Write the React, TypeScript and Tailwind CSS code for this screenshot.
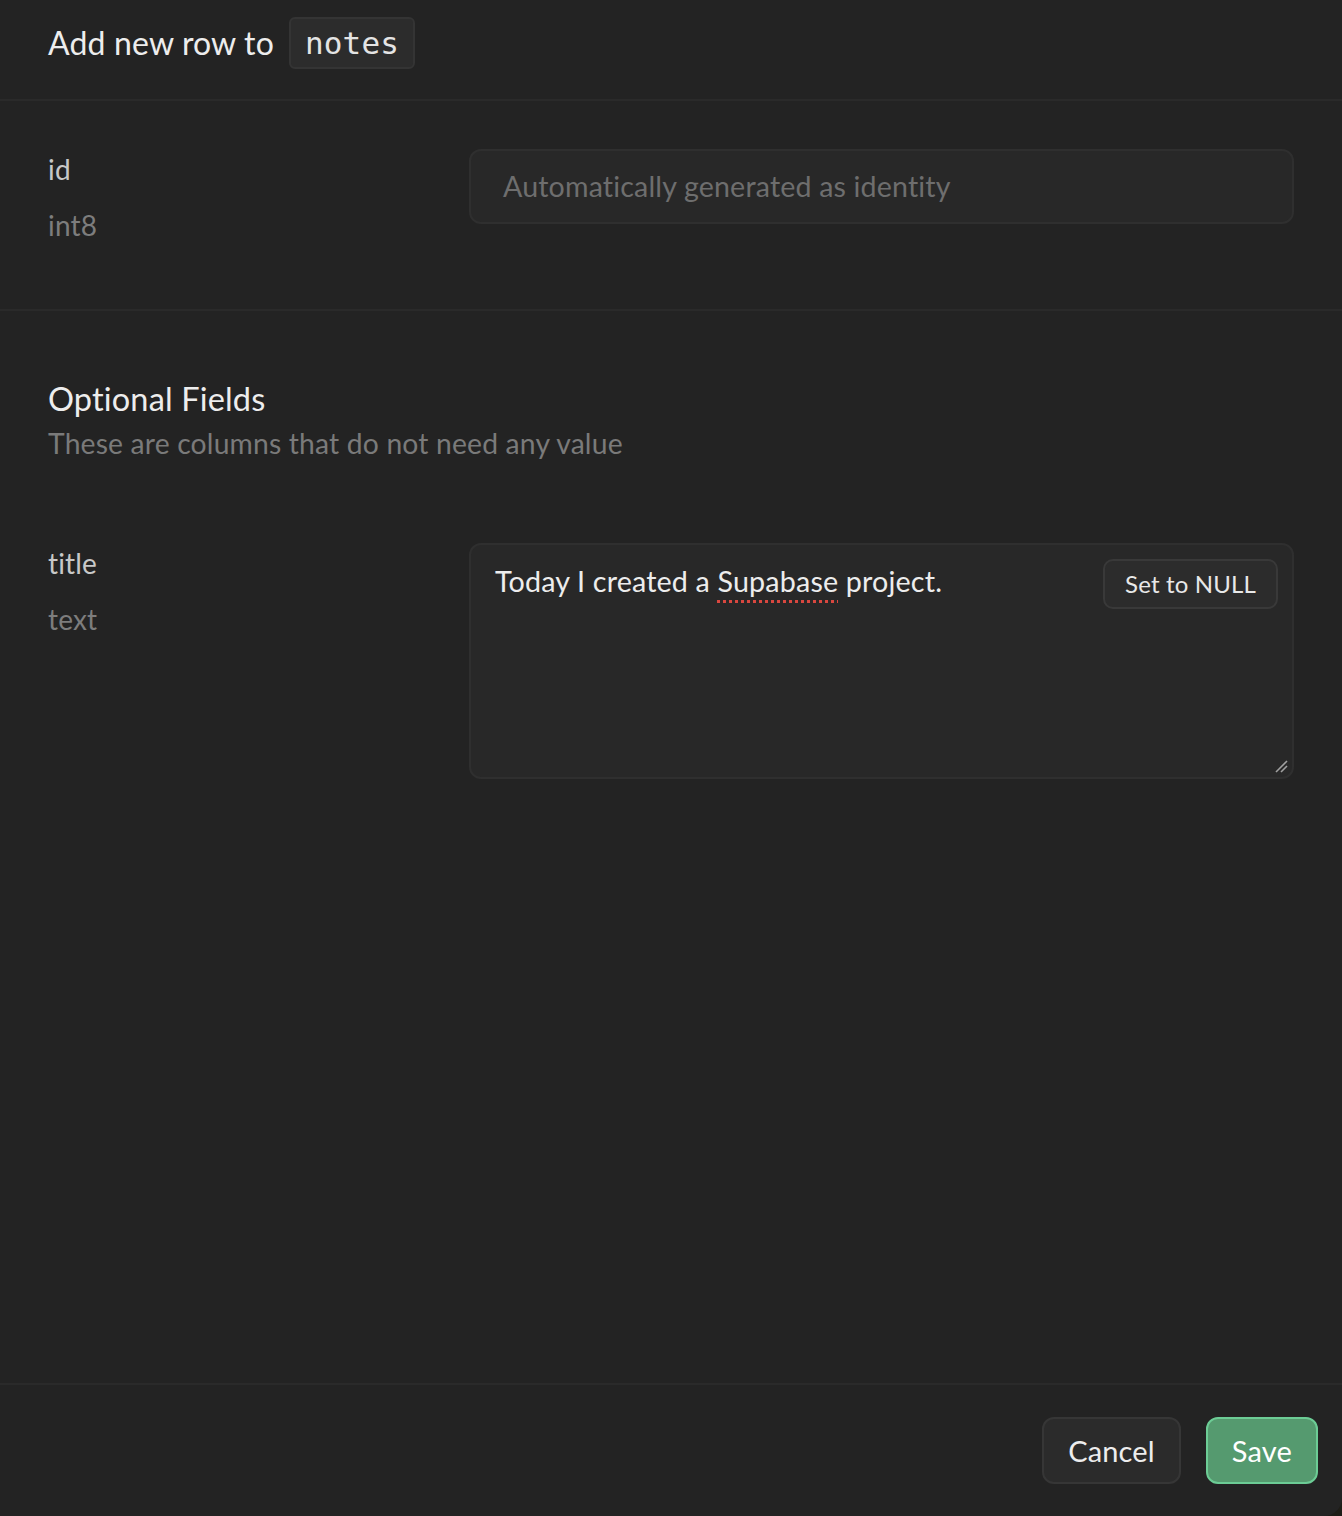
import React from 'react';

const font = { fontFamily: 'Lato, "Noto Sans", sans-serif' };

function FieldLabel({ name, type }: { name: string; type: string }) {
  return (
    <div className="flex w-[421px] shrink-0 flex-col gap-[18px] pt-[1px]">
      <span className="text-[28px] leading-[38px] text-[#c8c8c8]">{name}</span>
      <span className="text-[28px] leading-[38px] text-[#7d7d7d]">{type}</span>
    </div>
  );
}

export default function App() {
  return (
    <div className="bg-[#1e1d17]" style={font}>
      <div className="flex h-[1516px] w-[1342px] flex-col overflow-hidden rounded-br-[18px] bg-[#232323] tracking-[0.01em]">
        {/* Header */}
        <header className="flex h-[101px] shrink-0 items-center gap-[15px] border-b-2 border-[#2a2a2a] px-[48px] pb-[14px]">
          <h1 className="text-[32px] leading-none text-[#ededed]">Add new row to</h1>
          <code className="rounded-[6px] border-2 border-[#343434] bg-[#2c2c2c] px-[14px] py-[8px] font-['DejaVu_Sans_Mono',monospace] text-[31px] leading-[32px] text-[#e4e4e4]">
            notes
          </code>
        </header>

        {/* Required field */}
        <section className="flex shrink-0 border-b-2 border-[#2a2a2a] px-[48px] pt-[48px] pb-[65px]">
          <FieldLabel name="id" type="int8" />
          <div className="flex h-[75px] flex-1 items-center rounded-[12px] border-2 border-[#2f2f2f] bg-[#282828] px-[32px]">
            <span className="text-[28.6px] text-[#6e6e6e]">Automatically generated as identity</span>
          </div>
        </section>

        {/* Optional fields */}
        <section className="flex flex-1 flex-col px-[48px] pt-[68px]">
          <h2 className="text-[32.5px] leading-[40px] text-[#ededed]">Optional Fields</h2>
          <p className="mt-[4px] text-[28.3px] leading-[40px] text-[#7a7a7a]">These are columns that do not need any value</p>

          <div className="mt-[80px] flex">
            <FieldLabel name="title" type="text" />
            <div className="relative h-[236px] flex-1 rounded-[12px] border-2 border-[#2f2f2f] bg-[#282828] pl-[24px] pr-[14px] pt-[14px]">
              <div className="flex items-start justify-between">
                <p className="pt-[2px] text-[28.7px] leading-[40px] text-[#ededed]">
                  Today I created a{' '}
                  <span className="underline decoration-[#d9473f] decoration-dotted decoration-[3px] underline-offset-[8px]">Supabase</span>{' '}
                  project.
                </p>
                <button className="rounded-[10px] border-2 border-[#393939] bg-[#2c2c2c] px-[20px] py-[6px] text-[24px] leading-[34px] text-[#e8e8e8]">
                  Set to NULL
                </button>
              </div>
              <svg className="absolute bottom-[4px] right-[4px]" width="14" height="14" viewBox="0 0 14 14">
                <line x1="2" y1="13" x2="13" y2="2" stroke="#a0a0a0" strokeWidth="1.6" />
                <line x1="7" y1="13" x2="13" y2="7" stroke="#a0a0a0" strokeWidth="1.6" />
              </svg>
            </div>
          </div>
        </section>

        {/* Footer */}
        <footer className="flex h-[133px] shrink-0 items-start justify-end gap-[25px] border-t-2 border-[#2a2a2a] pr-[24px] pt-[32px]">
          <button className="h-[67px] rounded-[12px] border-2 border-[#363636] bg-[#2b2b2b] px-[24px] text-[29px] text-[#ededed]">
            Cancel
          </button>
          <button className="h-[67px] rounded-[12px] border-2 border-[#6ccc95] bg-[#559a6f] px-[24px] text-[29px] text-white">
            Save
          </button>
        </footer>
      </div>
    </div>
  );
}
